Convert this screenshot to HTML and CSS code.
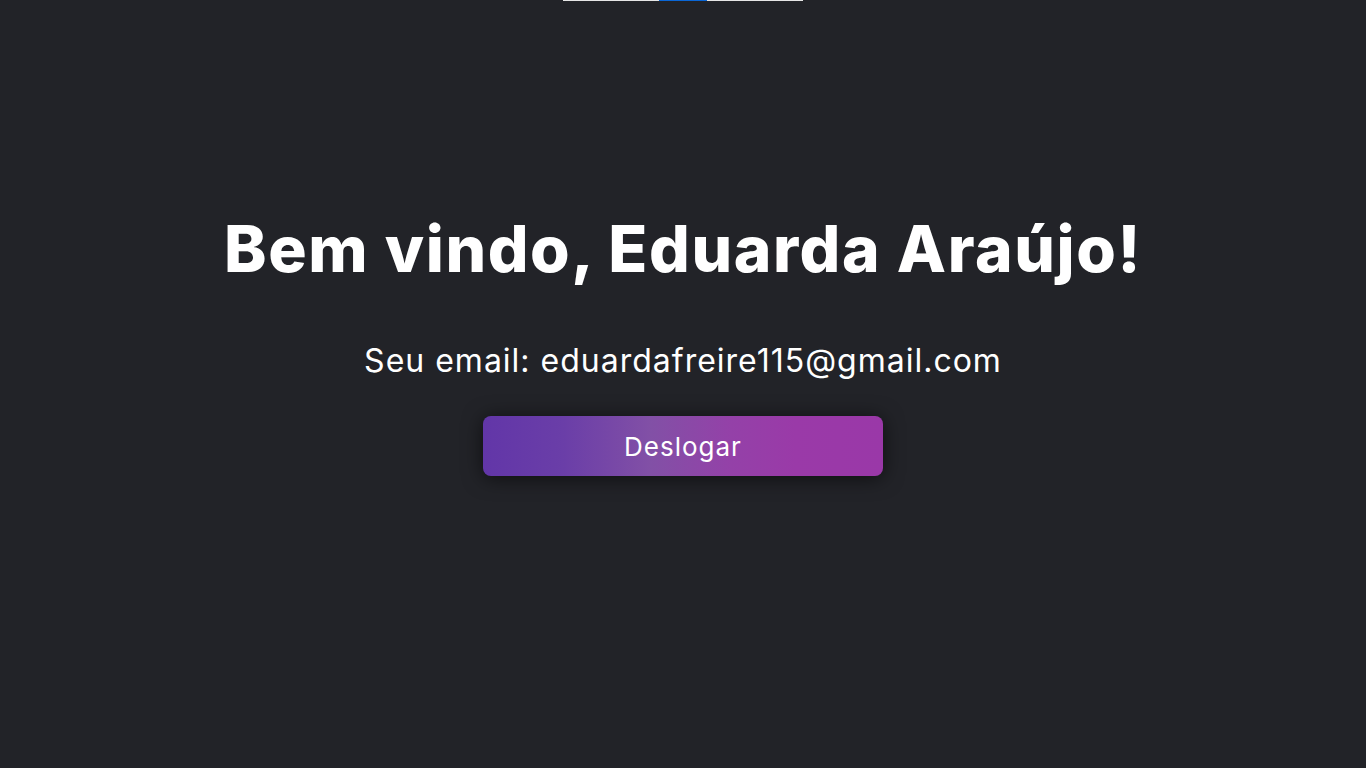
FILE: index.html
```html
<!DOCTYPE html>
<html lang="pt-BR">
<head>
<meta charset="utf-8">
<title>Bem vindo</title>
<link rel="stylesheet" href="styles.css">
</head>
<body>
<div class="topbar">
  <div class="seg seg-light"></div>
  <div class="seg seg-blue"></div>
  <div class="seg seg-light2"></div>
</div>
<main class="welcome">
  <h1 class="title">Bem vindo, Eduarda Araújo!</h1>
  <p class="email">Seu email: eduardafreire115@gmail.com</p>
  <button class="logout" type="button">Deslogar</button>
</main>
</body>
</html>
```
FILE: styles.css
```css
* { box-sizing: border-box; }
html, body {
  margin: 0;
  height: 100%;
}
body {
  background: #222328;
  color: #ffffff;
  font-family: "Inter", "Noto Sans", sans-serif;
  display: flex;
  flex-direction: column;
  align-items: center;
}
.topbar {
  display: flex;
  width: 240px;
  height: 1px;
}
.seg { height: 1px; }
.seg-light { width: 96px; background: #e6e6e6; }
.seg-blue { width: 48px; background: #0a66d6; }
.seg-light2 { width: 96px; background: #e6e6e6; }
.welcome {
  display: flex;
  flex-direction: column;
  align-items: center;
  padding-top: 208px;
}
.title {
  margin: 0;
  font-family: "Inter", sans-serif;
  font-weight: 800;
  font-size: 64px;
  line-height: 80px;
  letter-spacing: 1.6px;
}
.email {
  margin: 52px 0 0 0;
  font-size: 32px;
  line-height: 40px;
  font-weight: 400;
  letter-spacing: 1px;
}
.logout {
  margin-top: 35px;
  width: 400px;
  height: 60px;
  border: none;
  border-radius: 8px;
  background: linear-gradient(90deg, #6236a8 0%, #6a3ea8 20%, #8250a6 42%, #9441a8 62%, #9a3aa8 78%, #9a38a8 100%);
  color: #ffffff;
  font-family: "Inter", sans-serif;
  font-size: 26px;
  letter-spacing: 1px;
  box-shadow: 0 2px 20px rgba(0, 0, 0, 0.6);
}
```
